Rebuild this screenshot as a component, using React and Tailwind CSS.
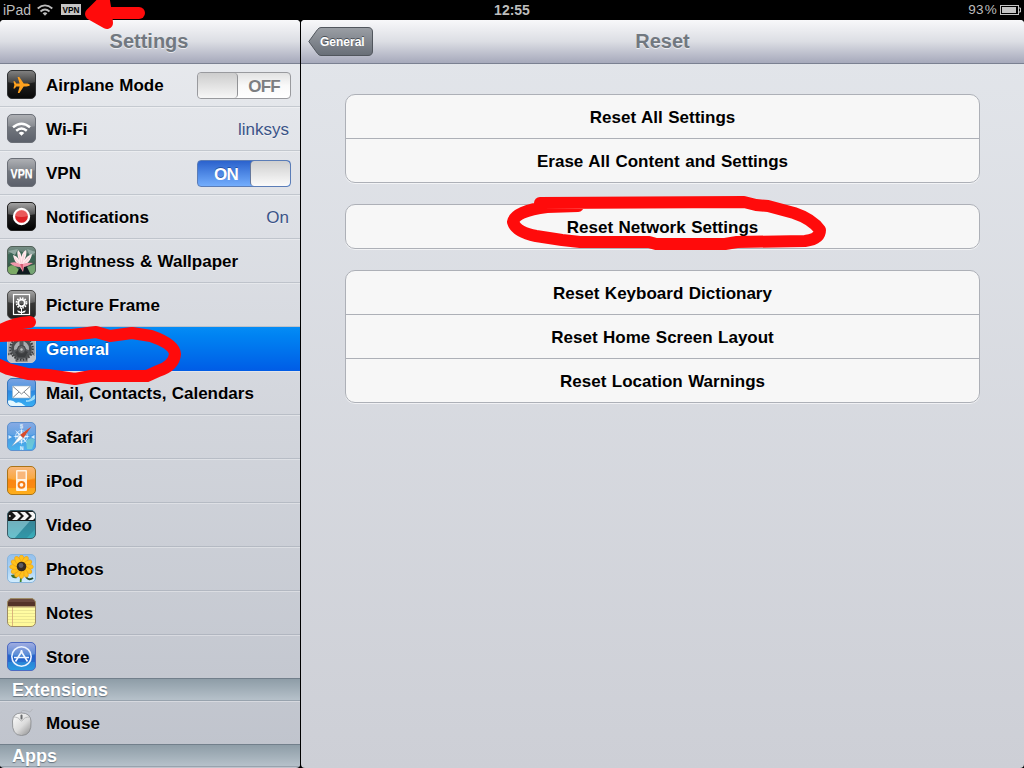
import React from 'react'

const Tile = ({ id, from, to, stroke = '#4b4f55', gloss = 0.3, children }) => (
  <svg viewBox="0 0 29 29" className="w-[29px] h-[29px] shrink-0">
    <defs>
      <linearGradient id={id} x1="0" y1="0" x2="0" y2="1">
        <stop offset="0" stopColor={from} />
        <stop offset="1" stopColor={to} />
      </linearGradient>
      <linearGradient id={id + 'Gloss'} x1="0" y1="0" x2="0" y2="1">
        <stop offset="0" stopColor="#fff" stopOpacity={gloss * 1.6} />
        <stop offset="1" stopColor="#fff" stopOpacity={gloss * 0.5} />
      </linearGradient>
      <clipPath id={id + 'Clip'}>
        <rect x="0.5" y="0.5" width="28" height="28" rx="4.5" />
      </clipPath>
    </defs>
    <rect x="0.5" y="0.5" width="28" height="28" rx="4.5" fill={`url(#${id})`} />
    <g clipPath={`url(#${id}Clip)`}>
      <path d="M0 0H29V12Q14.500 16 0 12Z" fill={`url(#${id}Gloss)`} />
      {children}
    </g>
    <rect x="0.5" y="0.5" width="28" height="28" rx="4.5" fill="none" stroke={stroke} />
  </svg>
)

const AirplaneIcon = () => (
  <Tile id="plane" from="#333" to="#080808" stroke="#303234" gloss={0.25}>
    <path
      d="M22.800 15C22.800 14 21 13.500 19.500 13.500H16.700L12.300 7H10.600L12.600 13.500H9.300L7.800 11.300H6.400L7.400 15L6.400 18.500H7.800L9.300 16.400H12.600L10.800 23H12.400L16.700 16.400H19.500C21 16.400 22.800 16 22.800 15Z"
      fill="#ffa11e"
    />
  </Tile>
)

const WifiIcon = () => (
  <Tile id="wifi" from="#85888e" to="#5b606a" stroke="#6b6f77" gloss={0.22}>
    <g fill="none" stroke="#fff" strokeWidth="2.500">
      <path d="M6 13.200Q14.500 6.200 23 13.200" />
      <path d="M9.200 16.700Q14.500 12.200 19.800 16.700" />
    </g>
    <path d="M11.700 19Q14.500 16.700 17.300 19L14.500 21.800Z" fill="#fff" />
  </Tile>
)

const VpnIcon = () => (
  <Tile id="vpn" from="#85888e" to="#5b606a" stroke="#6b6f77" gloss={0.22}>
    <text
      x="14.500"
      y="19.600"
      textAnchor="middle"
      textLength="22"
      lengthAdjust="spacingAndGlyphs"
      fontFamily="Liberation Sans, sans-serif"
      fontWeight="bold"
      fontSize="13"
      fill="#fff"
    >
      VPN
    </text>
  </Tile>
)

const NotificationsIcon = () => (
  <Tile id="notif" from="#3a3a3a" to="#000" stroke="#222" gloss={0.35}>
    <circle cx="14.500" cy="14.500" r="7.500" fill="#de2227" stroke="#fff" strokeWidth="2.300" />
    <path d="M8.200 14A6.300 6.300 0 0 1 20.800 14Q14.500 16 8.200 14Z" fill="#f59290" fillOpacity="0.500" />
  </Tile>
)

const WallpaperIcon = () => (
  <Tile id="lotus" from="#57756a" to="#294b3a" stroke="#526058" gloss={0.12}>
    <path d="M0 9L9 4L29 10V15L0 17Z" fill="#3c6555" />
    <path d="M1 5L11 3L8 9Z M20 3L29 6L23 10Z" fill="#92a9a2" />
    <path d="M0 23Q5 15 12 24L10 29H0Z" fill="#7ba965" />
    <path d="M12 23L20 20L25 29H9Z" fill="#101b20" />
    <path d="M20 21L29 18V29H24Z" fill="#74a573" />
    <path d="M14.500 20C9 18 7 14 6 9C10 10 11 12 12 14C10 9 10 6 11 4C14 7 14 9 14.500 11C15 8 16 6 19 4C20 8 19 10 17.500 14C19 11 22 9 25 8C24 14 20 19 14.500 20Z" fill="#ffe9ec" />
    <path d="M14.500 20L7.500 12M14.500 20L12 8M14.500 20L17 8M14.500 20L23 11" stroke="#f3bfca" strokeWidth="0.600" />
    <path d="M3 17Q10 15 14 19Q19 16 26 17Q21 20 17 21L16 26L13 21Q7 21 3 17Z" fill="#f099ab" />
    <path d="M13 18L16 18L16 25Z" fill="#d95c74" />
  </Tile>
)

const PictureFrameIcon = () => (
  <Tile id="frame" from="#4b4b4b" to="#202020" stroke="#4b4b4b" gloss={0.32}>
    <rect x="6.500" y="4.500" width="16" height="20" fill="none" stroke="#fff" strokeWidth="1.200" />
    <circle cx="14.500" cy="13" r="3.300" fill="none" stroke="#fff" strokeWidth="1.800" />
    <circle cx="14.500" cy="13" r="5" fill="none" stroke="#fff" strokeWidth="1.700" strokeDasharray="1.500 1.120" />
    <path d="M14.500 18V24" fill="none" stroke="#fff" />
    <path d="M14.500 23Q11 23.500 10 20.500Q14 20.500 14.500 23Q15 20.500 19 20.500Q18 23.500 14.500 23Z" fill="#fff" />
  </Tile>
)

const GeneralIcon = () => (
  <Tile id="gear" from="#b4b4b6" to="#8b8d90" stroke="#c3c6cb" gloss={0.1}>
    <circle cx="3.500" cy="26" r="6" fill="#bfc0c2" stroke="#535456" strokeWidth="2" strokeDasharray="1.500 1" />
    <circle cx="25.500" cy="26" r="6" fill="#bfc0c2" stroke="#535456" strokeWidth="2" strokeDasharray="1.500 1" />
    <circle cx="14.500" cy="14.500" r="11.300" fill="none" stroke="#3a3b3d" strokeWidth="2" strokeDasharray="1.600 1.350" />
    <circle cx="14.500" cy="14.500" r="9" fill="#a9abad" stroke="#4b4d4f" strokeWidth="3" />
    <path d="M14.500 15V5M14.500 15L6 19M14.500 15L23 19" stroke="#55575a" strokeWidth="4" />
    <path d="M8 18L14.500 15L21 18L18 23H11Z" fill="#3b3d3f" />
    <circle cx="14.500" cy="15.500" r="4" fill="#66686a" stroke="#404143" />
    <circle cx="14.500" cy="15.500" r="1.200" fill="#c4c5c7" />
  </Tile>
)

const MailIcon = () => (
  <Tile id="mail" from="#2467cf" to="#38b0f4" stroke="#3677bd" gloss={0.25}>
    <path d="M0 23Q5 21 9 25Q13 23 17 27L20 29H0Z" fill="#e3f8ff" />
    <path d="M19 22Q23 23 26 18L29 16V20Q25 24 19 24Z" fill="#9bdaf9" />
    <rect x="5.500" y="8" width="18" height="12" rx="0.500" fill="#fff" stroke="#9eb4c5" strokeWidth="0.600" />
    <path d="M6 8.500L14.500 16L23 8.500M6 19.500L12 14M23 19.500L17 14" fill="none" stroke="#84898f" />
  </Tile>
)

const SafariIcon = () => (
  <Tile id="safari" from="#4a7fd6" to="#48b4ee" stroke="#5e91cd" gloss={0.22}>
    <path d="M19 19Q24 14 28 18L25 27H20Z" fill="#8ce3c8" fillOpacity="0.500" />
    <circle cx="14.500" cy="14.500" r="6" fill="none" stroke="#bddfff" strokeWidth="0.900" />
    <path d="M14.500 6L15.700 12L21 8L17.200 13.300L23 14.500L17.200 15.700L20 21L15.700 17.200L14.500 23L13.300 17.200L8 21L11.800 15.700L6 14.500L11.800 13.300L8 8L13.300 12Z" fill="#e5f3ff" />
    <g fontFamily="Liberation Sans, sans-serif" fontSize="5" fontWeight="bold" fill="#d8edff" textAnchor="middle">
      <text x="14.500" y="5.500">S</text>
      <text x="14.500" y="27.500">N</text>
    </g>
    <path d="M1.500 13V17L5 15ZM27.500 13V17L24 15Z" fill="#d8edff" />
    <path d="M24.500 4.500L16.200 16.200L12.900 12.900Z" fill="#d84b2b" />
    <path d="M4.500 24.500L12.900 12.900L16.200 16.200Z" fill="#fff" stroke="#6a9bc5" strokeWidth="0.500" />
  </Tile>
)

const IpodIcon = () => (
  <Tile id="ipod" from="#f48a25" to="#ffae1a" stroke="#aa7418" gloss={0.25}>
    <path d="M0 13Q14 16 29 13V22H0Z" fill="#fa7008" fillOpacity="0.500" />
    <rect x="9" y="4" width="11" height="21" rx="1" fill="#fff3e2" />
    <rect x="10.500" y="5.500" width="8" height="7.500" fill="#f9b77a" />
    <circle cx="14.500" cy="18.800" r="2.900" fill="#fff8ee" stroke="#f57b13" strokeWidth="2" />
  </Tile>
)

const VideoIcon = () => (
  <Tile id="video" from="#4a7f92" to="#37aebb" stroke="#3b5b66" gloss={0}>
    <path d="M0 11H23L7 29H0Z" fill="#c5e9f0" fillOpacity="0.350" />
    <path d="M23 11H29V18L19 29H7Z" fill="#246f87" fillOpacity="0.350" />
    <path d="M0 0H29V11H0Z" fill="#171717" />
    <path d="M5 2H10L14 6L10 10H5L9 6ZM13 2H18L22 6L18 10H13L17 6ZM21 2H26L29 5V7L26 10H21L25 6Z" fill="#f5f5f5" />
    <circle cx="2.800" cy="6" r="1" fill="#ddd" />
  </Tile>
)

const PhotosIcon = () => (
  <Tile id="photos" from="#75aee7" to="#d3eeff" stroke="#89b5dc" gloss={0.15}>
    <path d="M14.500 18L13.500 29" stroke="#428524" strokeWidth="1.800" />
    <path d="M10 24Q9 19 4 21Q5 25 10 24Z" fill="#3d702d" />
    <path d="M19 23Q22 27 26 24" fill="none" stroke="#294b29" strokeWidth="1.800" />
    <g fill="#ffc11c" stroke="#ec980b" strokeWidth="0.500">
      {[0, 30, 60, 90, 120, 150, 180, 210, 240, 270, 300, 330].map((a) => (
        <ellipse key={a} cx="14.500" cy="6" rx="2.500" ry="5" transform={`rotate(${a} 14.500 12.800)`} />
      ))}
    </g>
    <circle cx="14.500" cy="12.500" r="4.800" fill="#36291f" />
    <circle cx="14" cy="11.500" r="2.400" fill="#5c5b64" />
  </Tile>
)

const NotesIcon = () => (
  <Tile id="notes" from="#ffffac" to="#fff897" stroke="#9d8c65" gloss={0}>
    <path d="M0 12.500H29M0 15.500H29M0 18.500H29M0 21.500H29M0 24.500H29" stroke="#e3dc8c" strokeWidth="0.700" />
    <path d="M5.500 9V29" stroke="#d3a374" strokeWidth="0.800" />
    <path d="M0 0H29V8.500H0Z" fill="#543329" />
    <path d="M0 0H29V4H0Z" fill="#6a483d" />
    <path d="M0 9H29" stroke="#b59a6d" />
  </Tile>
)

const StoreIcon = () => (
  <Tile id="store" from="#324dbe" to="#279be1" stroke="#4d6ac1" gloss={0.35}>
    <path d="M0 13Q14.500 17 29 13V20H0Z" fill="#1f45c0" fillOpacity="0.400" />
    <circle cx="14.500" cy="14.500" r="9.700" fill="none" stroke="#eaf2ff" strokeWidth="1.600" />
    <g fill="none" stroke="#f2f7ff" strokeWidth="1.600">
      <path d="M13.700 8.500L20.500 19.500M15.300 8.500L8.500 19.500" />
      <path d="M7 15.500H22" />
    </g>
  </Tile>
)

const MouseIcon = () => (
  <svg viewBox="0 0 29 29" className="w-[29px] h-[29px] shrink-0">
    <defs>
      <linearGradient id="mouse" x1="0" y1="0" x2="0.8" y2="1">
        <stop offset="0" stopColor="#fff" />
        <stop offset="0.6" stopColor="#dcdcdc" />
        <stop offset="1" stopColor="#9b9b9c" />
      </linearGradient>
    </defs>
    <path d="M14.500 5.500Q13 2 17 2.500T22 4T25.500 1" fill="none" stroke="#aeb1b6" strokeWidth="0.800" />
    <path d="M5.500 13Q6 5 14.500 5Q23.500 5 24 13Q25 27.500 14.500 27.500Q4.500 27.500 5.500 13Z" fill="url(#mouse)" stroke="#85888c" strokeWidth="0.800" />
    <path d="M6 9Q12 9 13 12Q14.500 14 16 12Q17 9 23 9" fill="none" stroke="#a6a7a9" strokeWidth="0.700" />
    <rect x="13.500" y="6.500" width="2" height="5" rx="1" fill="#686a6d" />
  </svg>
)

const Toggle = ({ on }) =>
  on ? (
    <div className="w-[94px] h-[27px] flex rounded-[4px] border border-[#5b7db7] bg-linear-to-b from-[#2b62cd] to-[#73adfc] overflow-hidden">
      <span className="w-[52px] pl-[4px] text-center text-[17px] leading-[27px] tracking-[-0.8px] font-bold text-white [text-shadow:0_-1px_0_#2453a6]">
        ON
      </span>
      <div className="flex-1 rounded-[4px] border-l border-[#65789c] bg-linear-to-b from-[#cfcfcf] to-[#fbfbfb]"></div>
    </div>
  ) : (
    <div className="w-[94px] h-[27px] flex rounded-[4px] border border-[#999a9e] bg-linear-to-b from-[#e2e2e2] via-[#f9f9f9] to-white overflow-hidden">
      <div className="w-[40px] rounded-[4px] border-r border-[#929396] bg-linear-to-b from-[#cdcdcd] to-[#f7f7f7]"></div>
      <span className="flex-1 text-center text-[17px] leading-[27px] tracking-[-0.9px] font-bold text-[#7d7e81]">
        OFF
      </span>
    </div>
  )

const items = [
  { label: 'Airplane Mode', icon: AirplaneIcon, right: <Toggle /> },
  { label: 'Wi-Fi', icon: WifiIcon, value: 'linksys' },
  { label: 'VPN', icon: VpnIcon, right: <Toggle on /> },
  { label: 'Notifications', icon: NotificationsIcon, value: 'On' },
  { label: 'Brightness & Wallpaper', icon: WallpaperIcon },
  { label: 'Picture Frame', icon: PictureFrameIcon },
  { label: 'General', icon: GeneralIcon, active: true },
  { label: 'Mail, Contacts, Calendars', icon: MailIcon },
  { label: 'Safari', icon: SafariIcon },
  { label: 'iPod', icon: IpodIcon },
  { label: 'Video', icon: VideoIcon },
  { label: 'Photos', icon: PhotosIcon },
  { label: 'Notes', icon: NotesIcon },
  { label: 'Store', icon: StoreIcon },
]

const groups = [
  ['Reset All Settings', 'Erase All Content and Settings'],
  ['Reset Network Settings'],
  ['Reset Keyboard Dictionary', 'Reset Home Screen Layout', 'Reset Location Warnings'],
]

const Row = ({ label, icon: Icon, value, right, active, last }) => (
  <div
    className={
      'h-[44px] shrink-0 flex items-center pl-[7px] border-b ' +
      (active
        ? 'bg-linear-to-b from-[#058cf5] to-[#015de6] border-[#015de6] text-white [text-shadow:0_-1px_0_#0853ac]'
        : 'text-black [text-shadow:0_1px_0_#ffffff80] shadow-[inset_0_1px_0_#ffffff55] ' +
          (last ? 'border-transparent' : 'border-[#878f9b55]'))
    }
  >
    <Icon />
    <span className="ml-[10px] pt-[3px] text-[17px] font-bold [word-spacing:0.5px] whitespace-nowrap">{label}</span>
    {value && <span className="ml-auto mr-[11px] pt-[3px] text-[17px] text-[#3b5488]">{value}</span>}
    {right && <div className="ml-auto mr-[9px] pt-[2px]">{right}</div>}
  </div>
)

const SectionHeader = ({ children }) => (
  <div className="h-[23px] shrink-0 pl-[12px] border-t border-b border-t-[#727f8b] border-b-[#98a3ae] bg-linear-to-b from-[#8e9da7] to-[#b6c1ca] text-[18px] leading-[22px] font-bold text-white [text-shadow:0_1px_1px_#64717d]">
    {children}
  </div>
)

const StatusBar = () => (
  <div className="h-[20px] shrink-0 flex items-center bg-black text-[#bdbdbd] text-[14px] leading-[18px]">
    <div className="flex-1 flex items-center pl-[3px]">
      <span className="w-[34px] -mt-px">iPad</span>
      <svg viewBox="0 0 16 12" className="w-[16px] h-[12px]">
        <g fill="none" stroke="#bdbdbd" strokeWidth="1.800">
          <path d="M0.700 4.500Q8 -1.700 15.300 4.500" />
          <path d="M3.500 7.500Q8 3.500 12.500 7.500" />
        </g>
        <path d="M5.600 9.200Q8 7.200 10.400 9.200L8 11.700Z" fill="#bdbdbd" />
      </svg>
      <svg viewBox="0 0 20 11" className="ml-[8px] -mt-px w-[20px] h-[11px] overflow-visible">
        <rect width="20" height="11" fill="#c4c4c4" />
        <text x="1.500" y="9" textLength="17" lengthAdjust="spacingAndGlyphs" fontFamily="Liberation Sans, sans-serif" fontWeight="bold" fontSize="9.500" fill="#000">
          VPN
        </text>
      </svg>
    </div>
    <span className="-mt-px font-bold">12:55</span>
    <div className="flex-1 flex items-center justify-end pr-[3px] -mt-px">
      <span className="text-[13.5px] tracking-[0.2px]">93<span className="ml-px">%</span></span>
      <svg viewBox="0 0 21 10" className="ml-[3px] w-[21px] h-[10px]">
        <rect x="0.500" y="0.500" width="18" height="9" fill="none" stroke="#c4c4c4" />
        <rect x="2" y="2" width="14" height="6" fill="#c4c4c4" />
        <path d="M19 3H20.500V7H19" fill="none" stroke="#c4c4c4" />
      </svg>
    </div>
  </div>
)

const titleBar =
  'h-[43px] shrink-0 relative flex items-center bg-linear-to-b from-[#f8f8fa] via-[#dcdee4] to-[#a6a9bb] shadow-[0_1px_0_#7b8192] text-[20px] font-bold text-[#717880] [text-shadow:0_1px_0_#ffffffa0]'

const Marks = () => (
  <svg viewBox="0 0 1024 768" className="absolute inset-0 w-[1024px] h-[768px] pointer-events-none">
    <g fill="none" stroke="#ff0b0b" strokeLinecap="round" strokeLinejoin="round">
      <path d="M139 13H100" strokeWidth="12" />
      <path d="M104 1L91 14L107 23L106 13Z" strokeWidth="12" fill="#ff0b0b" />
      <path d="M30 322Q13 323 -3 332M-3 336L24 335H72L96 332L110 336L132 333L151 336Q174 344 175 354Q174 366 158 371L147 376H91L75 379L48 375L28 374L8 369L-3 364" strokeWidth="12" />
      <path d="M578 206L547 207Q515 211 513 222Q516 232 536 236L562 240L580 242H649L656 244H725L737 242L805 241Q820 239 820 230Q812 219 794 213L768 206L756 205L744 202L540 203" strokeWidth="12" />
    </g>
  </svg>
)

const App = () => {
  return (
    <div className="relative w-[1024px] h-[768px] overflow-hidden flex flex-col bg-black font-['Liberation_Sans',Arial,sans-serif] select-none">
      <StatusBar />
      <div className="flex-1 min-h-0 flex gap-px">
        <div className="w-[300px] flex flex-col rounded-[4px] overflow-hidden bg-linear-to-b from-[#e9ebef] to-[#bfc3cc]">
          <div className={titleBar + ' justify-center pr-[2px] pb-px'}>Settings</div>
          {items.map((item, i) => (
            <Row key={item.label} {...item} last={i === items.length - 1} />
          ))}
          <div className="-mt-px shrink-0 flex flex-col">
            <SectionHeader>Extensions</SectionHeader>
            <Row label="Mouse" icon={MouseIcon} last />
            <div className="-mt-px">
              <SectionHeader>Apps</SectionHeader>
            </div>
          </div>
        </div>
        <div className="flex-1 flex flex-col rounded-[4px] overflow-hidden bg-linear-to-b from-[#e3e6eb] to-[#cdcfd6]">
          <div className={titleBar}>
            <div className="flex-1 pl-[7px]">
              <div className="relative w-[66px] h-[30px]">
                <svg viewBox="0 0 66 30" className="absolute inset-0 w-[66px] h-[30px]">
                  <defs>
                    <linearGradient id="back" x1="0" y1="0" x2="0" y2="1">
                      <stop offset="0" stopColor="#9b9fa5" />
                      <stop offset="1" stopColor="#686e77" />
                    </linearGradient>
                  </defs>
                  <path d="M13 0.500H60Q64.500 0.500 64.500 5V24Q64.500 28.500 60 28.500H13Q11 28.500 9.500 26.500L0.800 14.500L9.500 2.500Q11 0.500 13 0.500Z" fill="url(#back)" stroke="#51565d" />
                </svg>
                <span className="relative block pl-[12px] text-[12px] leading-[30px] text-white [text-shadow:0_-1px_0_#4b5057]">
                  General
                </span>
              </div>
            </div>
            <span className="pb-px">Reset</span>
            <div className="flex-1 pr-[7px]"></div>
          </div>
          <div className="pt-[31px] pl-[44px] pr-[44px] flex flex-col gap-[21px]">
            {groups.map((group) => (
              <div
                key={group[0]}
                className="rounded-[10px] border border-[#adb0b7] bg-[#f7f7f7] shadow-[0_1px_0_#ffffffa0] divide-y divide-[#adb0b7]"
              >
                {group.map((label, i) => (
                  <div
                    key={label}
                    className={
                      'flex items-center justify-center pt-[3px] text-[17px] font-bold text-black [word-spacing:0.8px] ' +
                      (i === group.length - 1 ? 'h-[43px]' : 'h-[44px]')
                    }
                  >
                    {label}
                  </div>
                ))}
              </div>
            ))}
          </div>
        </div>
      </div>
      <Marks />
    </div>
  )
}

export default App
